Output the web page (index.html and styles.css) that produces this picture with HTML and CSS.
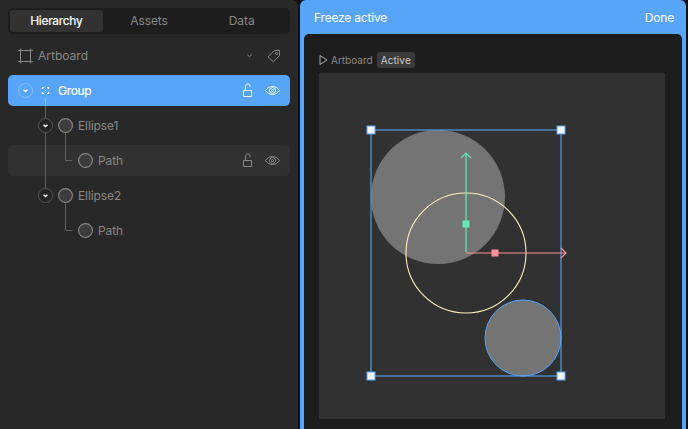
FILE: index.html
```html
<!DOCTYPE html>
<html lang="en">
<head>
<meta charset="utf-8">
<title>Editor</title>
<link rel="stylesheet" href="styles.css">
</head>
<body>
<svg class="defs" width="0" height="0" aria-hidden="true">
  <symbol id="expander" viewBox="0 0 16 16">
    <circle class="ring" cx="7.500" cy="7.500" r="7"/>
    <path class="chevron" d="M5.500 6.700l2 1.700 2-1.700"/>
  </symbol>
  <symbol id="ellipse" viewBox="0 0 16 16"><circle cx="7.500" cy="7.500" r="6.900"/></symbol>
  <symbol id="lock" viewBox="0 0 12 16">
    <path d="M1.500 7.500h8v6h-8zM3.500 7.500V3.200a2.300 2.300 0 0 1 4.600 0v1"/>
  </symbol>
  <symbol id="eye" viewBox="0 0 16 16">
    <path d="M.5 7.500C3.900 2.100 11.100 2.100 14.500 7.500 11.100 12.900 3.900 12.900.5 7.500z"/>
    <circle cx="7.500" cy="7.500" r="3"/><circle cx="7.500" cy="7.500" r="1"/>
  </symbol>
</svg>
<main class="app">
  <aside class="sidebar">
    <nav class="tabs">
      <button class="tab active">Hierarchy</button>
      <button class="tab">Assets</button>
      <button class="tab">Data</button>
    </nav>
    <header class="row artboard">
      <svg class="frame" width="16" height="16" viewBox="0 0 16 16"><path d="M2.500 .5v15M12.500 .5v15M.2 2.500h14.600M.2 13.500h14.600"/></svg>
      <span class="label">Artboard</span>
      <svg class="caret" width="8" height="8" viewBox="0 0 8 8"><path d="M1.300 2.700l2.200 2 2.200-2"/></svg>
      <svg class="tag" width="14" height="14" viewBox="0 0 14 14"><path d="M1 7.800L7 1.700l5.300-.5.2 5.500-6.200 6.100z"/><circle cx="9.500" cy="4.500" r="1.100"/></svg>
    </header>
    <section class="tree">
      <svg class="guides" width="80" height="175" viewBox="0 0 80 175">
        <path class="onblue" d="M37.500 23v8"/>
        <path d="M37.500 31v12M37.500 58v55M57.500 58v27.500h7M57.500 128v27.500h7"/>
      </svg>
      <div class="row selected">
        <svg class="icon expander"><use href="#expander"/></svg>
        <svg class="icon group" viewBox="0 0 16 16"><path d="M6 4.500H4.500V6M9 4.500h1.500V6M4.500 9v1.500H6M10.500 9v1.500H9M7 7.500h1"/></svg>
        <span class="label">Group</span>
        <svg class="lock"><use href="#lock"/></svg>
        <svg class="eye"><use href="#eye"/></svg>
      </div>
      <div class="row depth1">
        <svg class="icon expander"><use href="#expander"/></svg>
        <svg class="icon shape"><use href="#ellipse"/></svg>
        <span class="label">Ellipse1</span>
      </div>
      <div class="row depth2 hovered">
        <svg class="icon shape"><use href="#ellipse"/></svg>
        <span class="label">Path</span>
        <svg class="lock"><use href="#lock"/></svg>
        <svg class="eye"><use href="#eye"/></svg>
      </div>
      <div class="row depth1">
        <svg class="icon expander"><use href="#expander"/></svg>
        <svg class="icon shape"><use href="#ellipse"/></svg>
        <span class="label">Ellipse2</span>
      </div>
      <div class="row depth2">
        <svg class="icon shape"><use href="#ellipse"/></svg>
        <span class="label">Path</span>
      </div>
    </section>
  </aside>
  <section class="freeze">
    <header class="freeze-bar"><span>Freeze active</span><button>Done</button></header>
    <div class="stage">
      <div class="stage-title">
        <svg width="9" height="10" viewBox="0 0 9 10"><path d="M1 .5v9L8 5z"/></svg>
        <span>Artboard</span><span class="badge">Active</span>
      </div>
      <svg class="board" width="346" height="346" viewBox="319 73 346 346">
        <circle class="fill" cx="438" cy="197" r="67"/>
        <circle class="fill outlined" cx="523" cy="338" r="38"/>
        <rect class="bounds" x="371" y="130" width="190" height="246"/>
        <circle class="rotation" cx="466" cy="253" r="60"/>
        <g class="axis-y"><path class="line" d="M466 154v98"/><path class="head" d="M461 158l5-5 5 5"/><rect x="462.500" y="220.500" width="7" height="7"/></g>
        <g class="axis-x"><path class="line" d="M466 253h99"/><path class="head" d="M561 248l5 5-5 5"/><rect x="491.500" y="249.500" width="7" height="7"/></g>
        <g class="handles">
          <rect x="367" y="126" width="8" height="8"/><rect x="557" y="126" width="8" height="8"/>
          <rect x="367" y="372" width="8" height="8"/><rect x="557" y="372" width="8" height="8"/>
        </g>
      </svg>
    </div>
  </section>
</main>
</body>
</html>
```
FILE: styles.css
```css
* { box-sizing: border-box; }
body { margin: 0; background: #111; font: 12px/16px Inter, sans-serif; letter-spacing: -.1px; color: #888; overflow: hidden; }
button { border: 0; padding: 0; background: none; color: inherit; font: inherit; letter-spacing: inherit; }
svg { display: block; flex: none; fill: none; stroke: currentColor; }
.defs { position: absolute; }
.app { display: flex; height: 429px; gap: 2px; }

.sidebar { width: 298px; padding: 8px; background: #282828; border-radius: 0 6px 0 0; }
.tabs { display: flex; width: 282px; height: 26px; padding: 2px; background: #1d1d1d; border-radius: 5px; }
.tab { flex: 1; }
.tab.active { background: #323232; border-radius: 3px; color: #fff; letter-spacing: -.3px; -webkit-text-stroke: .2px #fff; }

.row { display: flex; align-items: center; width: 282px; height: 31px; padding: 0 10px; margin-bottom: 4px; border-radius: 5px; }
.label { flex: 1; }
.row.artboard { margin-top: 6px; }
.frame { margin-right: 4px; }
.artboard .label { letter-spacing: 0; }
.caret { margin-right: 13px; }
.tag { margin-right: -1px; }
.tree { position: relative; }
.guides { position: absolute; left: 0; top: 0; stroke: #606060; }
.guides .onblue { stroke: #8fc2fb; }
.icon { width: 16px; height: 16px; margin-right: 4px; }
.tree .icon, .tree .lock, .tree .eye { margin-top: 1px; }
.expander { --ring: #555; fill: #242424; }
.ring { stroke: var(--ring); }
.chevron { stroke: #fff; stroke-width: 1.5; fill: none; }
.shape { fill: #3c3c3c; stroke: #858585; stroke-width: 1.2; }
.depth1 { padding-left: 30px; }
.depth2 { padding-left: 70px; }
.hovered { background: #313131; }
.selected { background: #57a5f9; color: #fff; }
.selected .expander { --ring: #83bcfa; fill: none; }
.selected .label { letter-spacing: -.3px; -webkit-text-stroke: .2px #fff; }
.group { stroke-width: 1.2; }
.lock { width: 12px; height: 16px; margin-right: 11px; }
.eye { width: 16px; height: 16px; margin-right: -1px; }
.selected .lock, .selected .eye { opacity: .9; }

.freeze { width: 386px; padding: 0 4px; background: #57a5f9; border-radius: 6px 6px 0 0; }
.freeze-bar { display: flex; justify-content: space-between; align-items: center; height: 34px; padding: 1px 8px 0 10px; color: #fff; letter-spacing: -.2px; }
.stage { height: 395px; padding: 18px 15px 0; background: #1d1d1d; border-radius: 5px 5px 0 0; }
.stage-title { display: flex; align-items: center; height: 16px; margin-bottom: 5px; font-size: 10px; letter-spacing: 0; }
.stage-title svg { margin-right: 3px; stroke: #aaa; }
.badge { margin-left: 4px; padding: 0 4px; border-radius: 2px; background: #3a3a3a; color: #ccc; letter-spacing: .1px; }
.board { background: #313131; }
.fill { fill: #747474; stroke: none; }
.outlined { stroke: #57a5f9; }
.bounds { stroke: #57a5f9; stroke-width: 2; opacity: .55; }
.rotation { stroke: #fff1be; stroke-width: 1.1; }
.axis-y { color: #67e8b7; }
.axis-x { color: #ff929b; }
.axis-y rect, .axis-x rect { fill: currentColor; stroke: none; }
.line { stroke-width: 2; opacity: .5; }
.axis-y .line { opacity: .65; }
.head { stroke-width: 1.2; }
.handles rect { fill: #f3f3f3; stroke: #57a5f9; }
```
